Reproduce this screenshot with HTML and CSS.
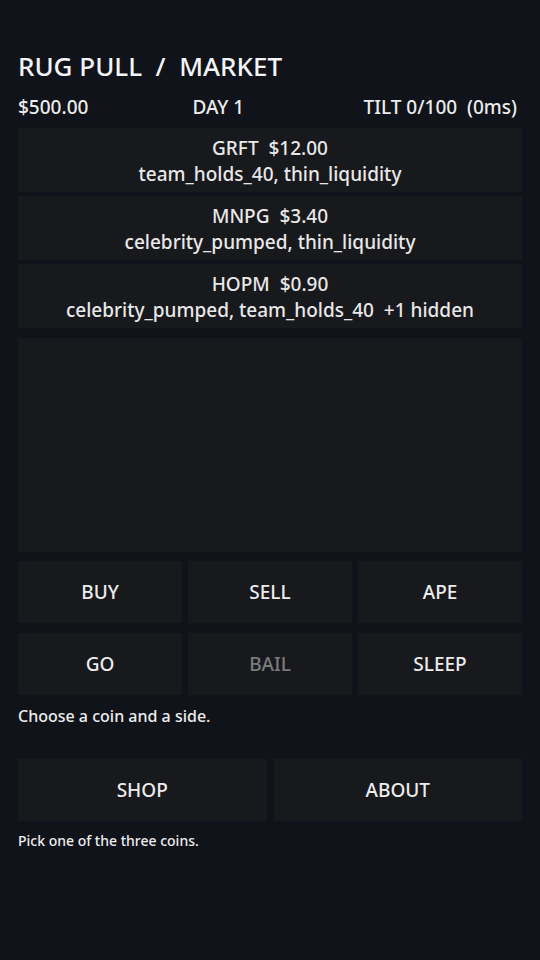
FILE: index.html
```html
<!DOCTYPE html>
<html lang="en">
<head>
    <meta charset="UTF-8">
    <meta name="viewport" content="width=device-width, initial-scale=1.0">
    <title>Rug Pull - Market</title>
    <link rel="stylesheet" href="styles.css">
</head>
<body>
    <div class="app">
        <h1 class="title">RUG PULL&nbsp; /&nbsp; MARKET</h1>

        <div class="stats">
            <span class="stat-cash">$500.00</span>
            <span class="stat-day">DAY 1</span>
            <span class="stat-tilt">TILT 0/100&nbsp; (0ms)</span>
        </div>

        <div class="coin-list">
            <div class="coin">
                <div class="coin-name">GRFT&nbsp; $12.00</div>
                <div class="coin-tags">team_holds_40, thin_liquidity</div>
            </div>
            <div class="coin">
                <div class="coin-name">MNPG&nbsp; $3.40</div>
                <div class="coin-tags">celebrity_pumped, thin_liquidity</div>
            </div>
            <div class="coin">
                <div class="coin-name">HOPM&nbsp; $0.90</div>
                <div class="coin-tags">celebrity_pumped, team_holds_40&nbsp; +1 hidden</div>
            </div>
        </div>

        <div class="chart"></div>

        <div class="actions">
            <button class="btn">BUY</button>
            <button class="btn">SELL</button>
            <button class="btn">APE</button>
            <button class="btn">GO</button>
            <button class="btn" disabled>BAIL</button>
            <button class="btn">SLEEP</button>
        </div>

        <p class="hint">Choose a coin and a side.</p>

        <div class="menu">
            <button class="btn">SHOP</button>
            <button class="btn">ABOUT</button>
        </div>

        <p class="status">Pick one of the three coins.</p>
    </div>
</body>
</html>
```

FILE: styles.css
```css
* {
    margin: 0;
    padding: 0;
    box-sizing: border-box;
    font-family: "Noto Sans", "Open Sans", sans-serif;
}

body {
    background-color: #11131a;
    color: #ececec;
    min-height: 100vh;
}

.app {
    padding: 47px 18px 0;
}

.title {
    font-size: 26px;
    font-weight: 500;
    line-height: 38px;
    color: #f4f4f4;
}

.stats {
    display: flex;
    font-size: 19px;
    font-weight: 500;
    line-height: 26px;
    margin-top: 9px;
    margin-bottom: 8px;
    padding-right: 5px;
}

.stat-day {
    margin-left: 104px;
}

.stat-tilt {
    margin-left: auto;
}

.coin-list {
    display: flex;
    flex-direction: column;
    gap: 4px;
}

.coin {
    background-color: #18191d;
    height: 64px;
    padding-top: 7px;
    text-align: center;
    font-size: 19px;
    font-weight: 500;
    line-height: 26px;
    color: #e8e8e8;
}

.chart {
    background-color: #18191d;
    height: 214px;
    margin-top: 10px;
}

.actions {
    display: grid;
    grid-template-columns: repeat(3, 1fr);
    column-gap: 6px;
    row-gap: 10px;
    margin-top: 9px;
}

.btn {
    background-color: #18191d;
    border: none;
    height: 62px;
    color: #ececec;
    font-size: 19px;
    font-weight: 500;
    cursor: pointer;
}

.btn:disabled {
    color: #7a7a7c;
    cursor: default;
}

.hint {
    font-size: 16px;
    font-weight: 500;
    line-height: 22px;
    margin-top: 10px;
}

.menu {
    display: grid;
    grid-template-columns: 1fr 1fr;
    column-gap: 7px;
    margin-top: 32px;
}

.status {
    font-size: 14px;
    font-weight: 500;
    line-height: 20px;
    margin-top: 10px;
}
```
